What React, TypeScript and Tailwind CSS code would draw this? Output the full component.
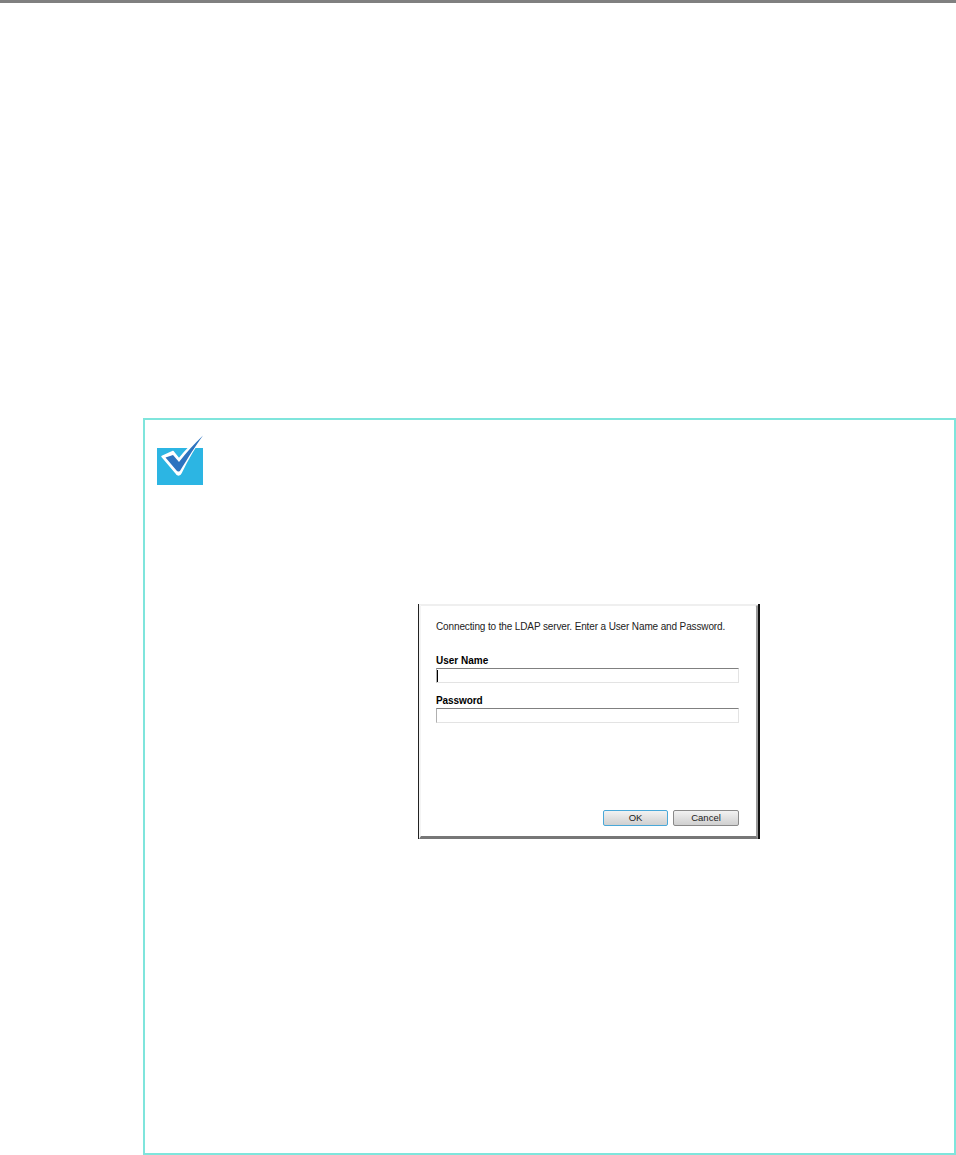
const App = () => {
  return (
    <div className="w-[956px] h-[1155px] bg-white flex flex-col font-['Liberation_Sans',Arial,sans-serif] overflow-hidden">
      <div className="h-[3px] bg-[#808080]" />
      <div className="mt-[415px] ml-[143px] h-[737px] border-2 border-[#7fe5dc] pl-3 pt-[14px]">
        <svg width="48" height="52" viewBox="0 0 48 52" className="block">
          <rect x="0" y="14" width="46" height="37" fill="#2cb5e3" />
          <path d="M5 22.5 L16 17.5 L22 25 C29 16 37 8 47 0 C39 11 31 24 24 39 C23 41.5 20 41.5 19 39 Z" fill="#ffffff" stroke="#ffffff" strokeWidth="1.5" strokeLinejoin="round" />
          <path d="M8.5 23.5 L16 21 L22 28 C29 19 37 10 46 1.5 C39 11 31 24 23.5 36 C22.5 38 20.5 38 19.5 36.5 Z" fill="#2d73bf" />
        </svg>
        <div className="mt-[118px] ml-[261px] w-[342px] h-[235px] flex flex-col border-l border-l-[#222222] border-r-2 border-r-[#111111]">
          <div className="flex-1 flex flex-col border-l-2 border-l-[#f4f4f4] border-r-2 border-r-[#9a9a9a] border-b-[3px] border-b-[#777777] border-t-2 border-t-[#efefef] rounded-tr-[3px] bg-white pl-[15px] pr-[17px] text-black">
            <p className="mt-[14px] text-[10px] tracking-[-0.13px] leading-[14px] whitespace-nowrap text-[#222222]">Connecting to the LDAP server. Enter a User Name and Password.</p>
            <label className="mt-[20px] text-[10px] leading-[14px] font-bold">User Name</label>
            <div className="h-[15px] border border-[#e3e3e3] border-t-[#808080] border-l-[#b0b0b0]">
              <div className="w-px h-[12px] mt-px bg-black" />
            </div>
            <label className="mt-[11px] text-[10px] tracking-[-0.1px] leading-[14px] font-bold">Password</label>
            <div className="h-[15px] border border-[#e3e3e3] border-t-[#808080] border-l-[#b0b0b0]" />
            <div className="mt-[87px] flex justify-end gap-[5px]">
              <button className="w-[65px] h-[16px] rounded-[2px] border border-[#4aa8d8] bg-gradient-to-b from-[#f2f2f2] to-[#d0d0d0] text-[9.5px] leading-[14px] text-[#222222]">OK</button>
              <button className="w-[66px] h-[16px] rounded-[2px] border border-[#8a8a8a] bg-gradient-to-b from-[#f2f2f2] to-[#d0d0d0] text-[9.5px] leading-[14px] text-[#222222]">Cancel</button>
            </div>
          </div>
        </div>
      </div>
    </div>
  );
};

export default App;
